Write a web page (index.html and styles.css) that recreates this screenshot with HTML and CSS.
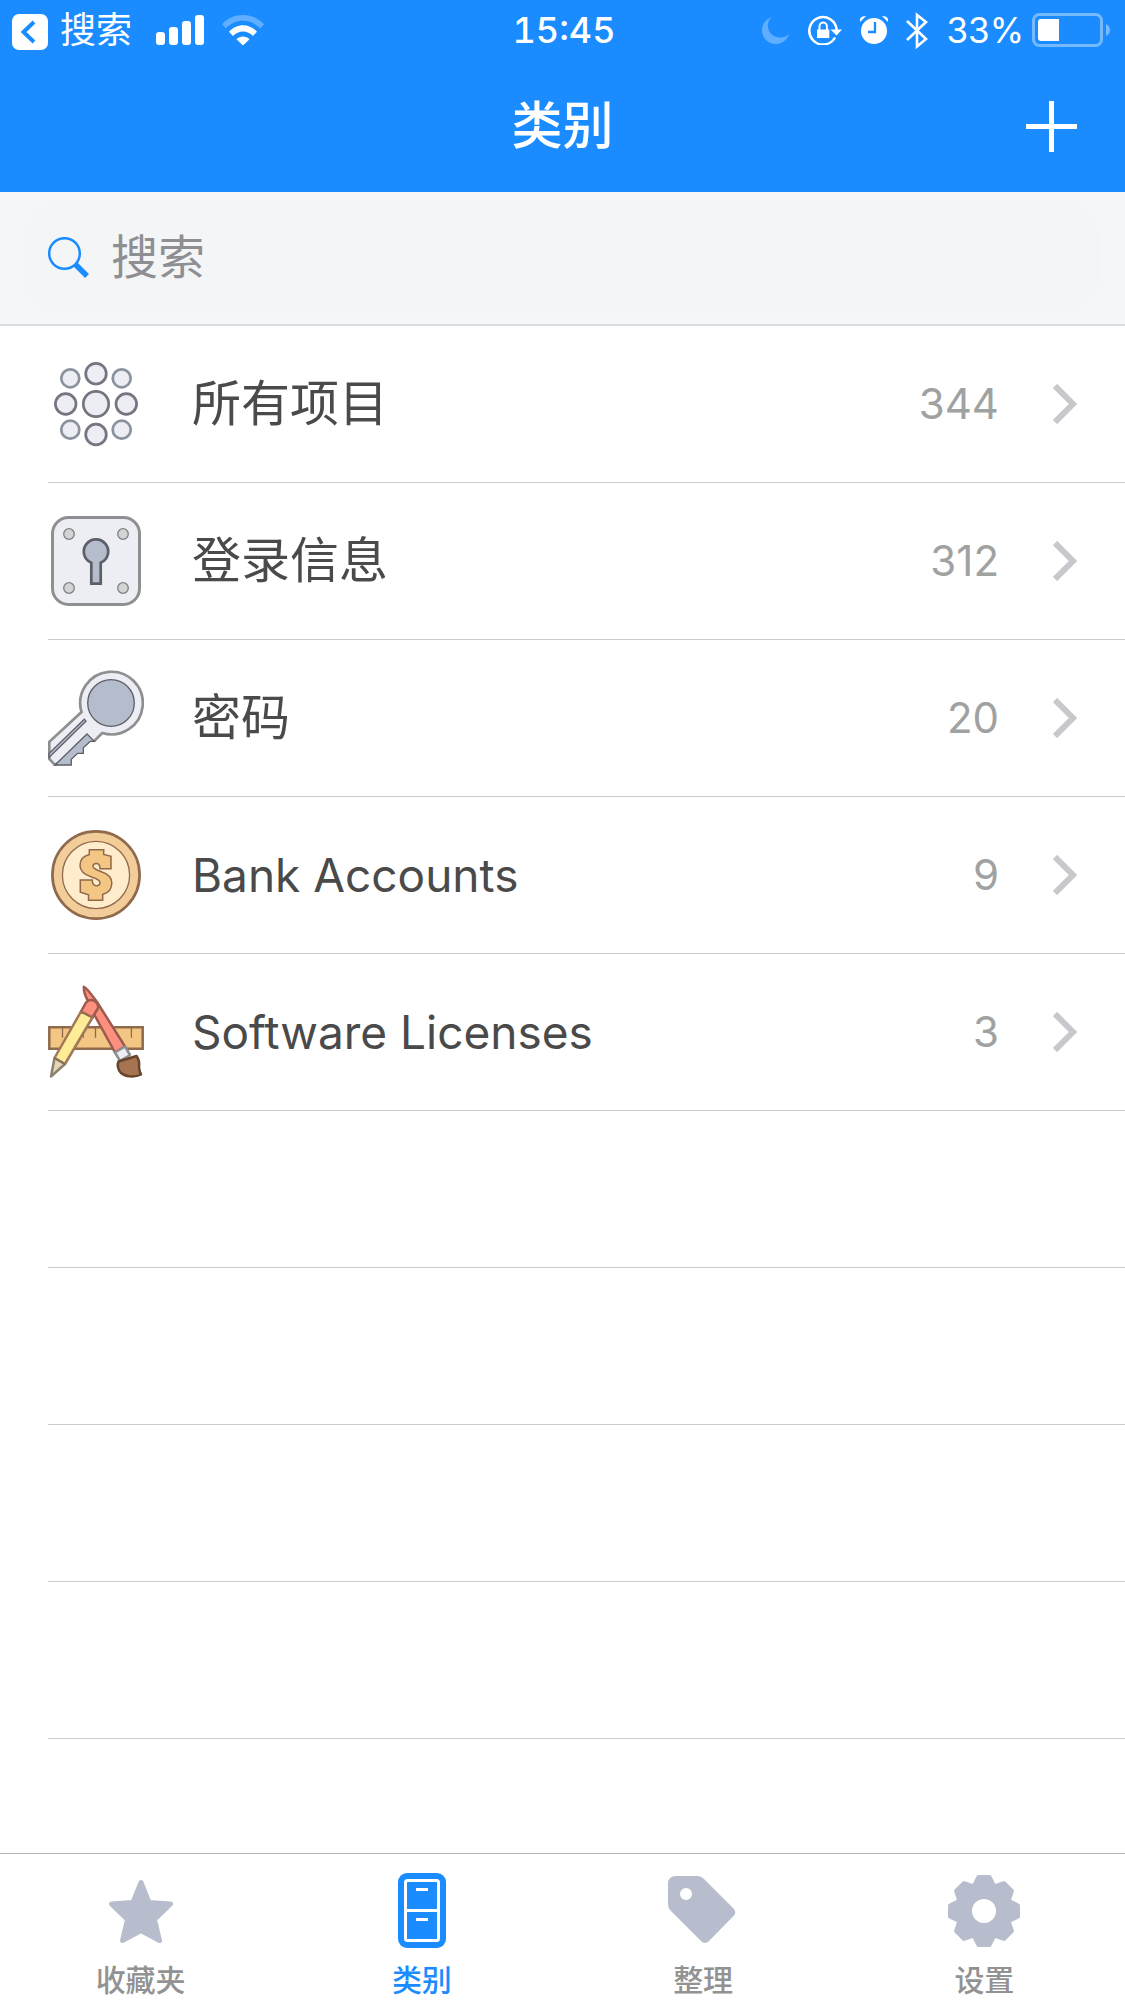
FILE: index.html
```html
<!DOCTYPE html>
<html lang="zh-CN">
<head>
<meta charset="utf-8">
<meta name="viewport" content="width=device-width, initial-scale=1">
<title>类别</title>
<link rel="stylesheet" href="styles.css">
</head>
<body>
<header class="top">
  <div class="status">
    <div class="status-side">
      <a class="status-back" href="#back">
        <svg width="36" height="40" viewBox="0 0 36 40" aria-hidden="true"><rect y="4" width="36" height="36" rx="7" fill="#fff"/><path d="M22 12 11.500 22 22 32" fill="none" stroke="#1a8cff" stroke-width="4"/></svg>
        <span>搜索</span>
      </a>
      <svg width="48" height="30" viewBox="0 0 48 30" fill="#fff" aria-hidden="true"><rect y="17" width="9" height="13" rx="3"/><rect x="13" y="12" width="9" height="18" rx="3"/><rect x="26" y="6" width="9" height="24" rx="3"/><rect x="39" width="9" height="30" rx="3"/></svg>
      <svg width="42" height="30" viewBox="0 0 42 30" fill="#fff" aria-hidden="true"><path opacity=".3" d="M0 9.200C11-3 31-3 42 9.200L38 13.500C28.500 3.300 13.500 3.300 4 13.500Z"/><path d="M7 16.800C14.500 8 27.500 8 35 16.800L31 21C25.500 15 16.500 15 11 21Z"/><path d="M14.500 24.200C18 20.500 24 20.500 27.500 24.200L21 30.500Z"/></svg>
    </div>
    <time class="status-time">15:45</time>
    <div class="status-side status-right">
      <svg width="28" height="28" viewBox="0 0 28 28" aria-hidden="true"><path fill="#fff" opacity=".3" d="M10 1C2 7 6 22 19 21.500C22 21.500 25 20 27.300 17.800C25 24 20 28 13.800 28C6 28 0 22 0 14.300C0 8 4 3 10 1Z"/></svg>
      <svg width="34" height="30" viewBox="0 0 34 30" aria-hidden="true"><path d="M27 22.500A13.700 13.700 0 1 1 28.700 15" fill="none" stroke="#fff" stroke-width="2.500"/><path fill="#fff" d="M22.500 14.500H34L28.500 20.500ZM9 14.500H21.300V23H9Z"/><path d="M11.500 15V11.500a3.700 4 0 0 1 7.400 0V15" fill="none" stroke="#fff" stroke-width="2"/></svg>
      <svg width="28" height="28" viewBox="0 0 28 28" aria-hidden="true"><circle cx="14" cy="15" r="13" fill="#fff"/><path d="M0 6V3Q1 0 6 0ZM28 6V3Q27 0 22 0Z" fill="#fff"/><path d="M15 6V16H8" fill="none" stroke="#1a8cff" stroke-width="2.300"/></svg>
      <svg width="22" height="37" viewBox="0 0 22 37" aria-hidden="true"><path d="M1 9 20 27 11 34.500V3L20 10 1 28" fill="none" stroke="#fff" stroke-width="2.600"/></svg>
      <span class="battery">33%
        <svg width="78" height="34" viewBox="0 0 78 34" aria-hidden="true"><rect x="1.500" y="1.500" width="68" height="31" rx="6" fill="none" stroke="#fff" stroke-opacity=".4" stroke-width="3"/><path d="M27 6V28H9Q6 28 6 25V9Q6 6 9 6Z" fill="#fff"/><path d="M74 11Q78 13 78 17T74 23Z" fill="#fff" opacity=".4"/></svg>
      </span>
    </div>
  </div>
  <div class="titlebar">
    <h1>类别</h1>
    <button class="add" type="button" aria-label="添加"><svg width="51" height="51" viewBox="0 0 51 51" aria-hidden="true"><path d="M0 25.500H51M25.500 0V51" stroke="#fff" stroke-width="5"/></svg></button>
  </div>
</header>

<form class="search">
  <label class="search-box">
    <svg width="41" height="41" viewBox="0 0 41 41" fill="none" stroke="#1a8cff" aria-hidden="true"><circle cx="16.500" cy="16.500" r="15.300" stroke-width="2.500"/><path d="M27 27 39 39" stroke-width="5.500"/></svg>
    <input type="search" placeholder="搜索" aria-label="搜索">
  </label>
</form>

<main class="list">
  <a class="row" href="#all">
    <svg class="icon" viewBox="0 0 96 96" fill="#edeef3" stroke-width="2.700" aria-hidden="true">
      <g stroke="#757582"><circle cx="48" cy="48" r="12.700"/><circle cx="48" cy="17.700" r="10.300"/><circle cx="48" cy="78.500" r="10.300"/><circle cx="17.700" cy="48" r="10.300"/><circle cx="78.300" cy="48" r="10.300"/></g>
      <g stroke="#8a929e"><circle cx="22.300" cy="22.300" r="9"/><circle cx="73.700" cy="22.300" r="9"/><circle cx="22.300" cy="73.700" r="9"/><circle cx="73.700" cy="73.700" r="9"/></g>
    </svg>
    <span class="name">所有项目</span><span class="count">344</span>
    <svg class="chevron" viewBox="0 0 24 40" aria-hidden="true"><path d="M2 2 20 20 2 38"/></svg>
  </a>
  <a class="row" href="#logins">
    <svg class="icon" viewBox="0 0 96 96" aria-hidden="true">
      <rect x="4.500" y="4.500" width="87" height="87" rx="16" fill="#edeef3" stroke="#8e8f90" stroke-width="3"/>
      <g fill="#d3d4d6" stroke="#7f8081" stroke-width="1.300"><circle cx="21" cy="21" r="5.300"/><circle cx="75" cy="21" r="5.300"/><circle cx="21" cy="75" r="5.300"/><circle cx="75" cy="75" r="5.300"/></g>
      <path d="M43.300 49.800A12.200 12.200 0 1 1 52.700 49.800V70.700H43.300Z" fill="#b5bccc" stroke="#5d5f68" stroke-width="2.700"/>
    </svg>
    <span class="name">登录信息</span><span class="count">312</span>
    <svg class="chevron" viewBox="0 0 24 40" aria-hidden="true"><path d="M2 2 20 20 2 38"/></svg>
  </a>
  <a class="row" href="#passwords">
    <svg class="icon" viewBox="0 0 96 96" aria-hidden="true">
      <path d="M33.500 42A31.300 31.300 0 1 1 54.300 63L46.500 70.700 7 95 1.300 89V71.800Z" fill="#edeef3" stroke="#8e8f90" stroke-width="2.700"/>
      <path d="M47.500 72.500 45 70 36 77 24 96H96V72.500Z" fill="#fff"/>
      <circle cx="63" cy="33" r="23.300" fill="#b5bccc" stroke="#5d5f68" stroke-width="1.300"/>
      <g fill="#b5bccc" stroke="#5d5f68" stroke-width="1.300"><path d="M39 64 46.300 71.300H42.300L35.300 77.700V83.300H29.700L23.300 89.300V95H7Z"/><path d="M36.300 49.200 38 51.200 1 87.500V83.500Z"/></g>
    </svg>
    <span class="name">密码</span><span class="count">20</span>
    <svg class="chevron" viewBox="0 0 24 40" aria-hidden="true"><path d="M2 2 20 20 2 38"/></svg>
  </a>
  <a class="row" href="#bank">
    <svg class="icon" viewBox="0 0 96 96" stroke="#8f6a4c" aria-hidden="true">
      <circle cx="48" cy="48" r="43.600" fill="#f3cd99" stroke-width="2.700"/><circle cx="48" cy="48" r="33.600" fill="#ffeccc" stroke-width="1.300"/>
      <path d="M41.300 22.700H55.700V27.500L63 29.300V41.700H52C52 38.500 50.500 36.500 48.300 36.500C46 36.500 45 38 45 39.300C45 42 50 43.500 54 45C60 47 63.800 50 63.800 56C63.800 62 60 66 54.700 67.500V73.300H40.500V67.800L32.300 65.300V53H44.300C44.300 57 46 58.700 48.500 58.700C51 58.700 52 57.300 52 55.500C52 53 48 51.500 43.500 50C36 47.500 32 44.500 32 38.500C32 32.500 36 28.800 41.300 27.500Z" fill="#f3c684" stroke-width="1.500"/>
    </svg>
    <span class="name" lang="en">Bank Accounts</span><span class="count">9</span>
    <svg class="chevron" viewBox="0 0 24 40" aria-hidden="true"><path d="M2 2 20 20 2 38"/></svg>
  </a>
  <a class="row" href="#licenses">
    <svg class="icon" viewBox="0 0 96 96" stroke-width="2.500" stroke-linejoin="round" aria-hidden="true">
      <path d="M1.300 43.300H94.700V64.700H1.300Z" fill="#f3c684" stroke="#8f6a4c" stroke-linejoin="miter"/>
      <path d="M14.500 44V53.700M35.300 44V53.700M47.500 44V53.700M83.400 44V53.700" stroke="#8f6a4c" stroke-width="1.300"/>
      <path d="M35.800 2.800C39 4 44 11 49 18L77 62.500 67 68.500 46.500 31 40 17Q35.500 9 35.800 2.800Z" fill="#ff907f" stroke="#9d5b4d"/>
      <path d="M77 62.500 67 68.500 72 77 82 71Z" fill="#edeef3" stroke="#8e8f90"/>
      <path d="M70.500 77.500 88.500 72Q92 77 91 83 91.500 88 93 90.500C86 94 77 92.500 73 89Q68 83 70.500 77.500Z" fill="#a67450" stroke="#66452c"/>
      <path d="M33 27.500 38 18.500Q41.500 14.500 46.500 17 51.500 20 49.800 24.500L44.500 33.500Z" fill="#ff907f" stroke="#9d5b4d"/>
      <path d="M33 27.500 44.500 33.500 17 80 6.500 74Z" fill="#ffec96" stroke="#a1785a"/>
      <path d="M6.500 74 17 80 3 92.500Z" fill="#e6d6b8" stroke="#8b8370"/>
      <path d="M32.500 27.500 44.500 33.500M6 74 17 80.500" stroke="#8f6a4c" stroke-width="1.300"/>
    </svg>
    <span class="name" lang="en">Software Licenses</span><span class="count">3</span>
    <svg class="chevron" viewBox="0 0 24 40" aria-hidden="true"><path d="M2 2 20 20 2 38"/></svg>
  </a>
  <div class="row"></div>
  <div class="row"></div>
  <div class="row"></div>
  <div class="row"></div>
</main>

<nav class="tabs">
  <a class="tab" href="#favorites">
    <svg class="tab-icon" viewBox="0 0 76 76" aria-hidden="true"><path d="M38 9.500 46 29.500 67.500 31 51.500 46.500 56.500 67.500 38 57.500 19.500 67.500 24.500 46.500 8.500 31 30 29.500Z" fill="currentColor" stroke="currentColor" stroke-width="5" stroke-linejoin="round"/></svg>
    <span class="tab-label">收藏夹</span>
  </a>
  <a class="tab active" href="#categories" aria-current="page">
    <svg class="tab-icon" viewBox="0 0 76 76" aria-hidden="true"><rect x="14" width="48" height="75" rx="9" fill="currentColor"/><g fill="none" stroke="#fff" stroke-width="3"><rect x="21.500" y="7.500" width="33" height="60" rx="2"/><path d="M22 37.500H54M32 16.500H44M32 46.500H44"/></g></svg>
    <span class="tab-label">类别</span>
  </a>
  <a class="tab" href="#organize">
    <svg class="tab-icon" viewBox="0 0 76 76" aria-hidden="true"><path fill="currentColor" fill-rule="evenodd" d="M11 3H33Q36 3 38.500 5.500L68.500 35.500Q72 40 68.500 43L44 68Q40 72 36 68L5.500 37.500Q3 35 3 31V11Q3 3 11 3ZM21 15a6 6 0 1 0 0 12a6 6 0 1 0 0-12Z"/></svg>
    <span class="tab-label">整理</span>
  </a>
  <a class="tab" href="#settings">
    <svg class="tab-icon" viewBox="-38 -38 76 76" aria-hidden="true">
      <g fill="currentColor" stroke="currentColor" stroke-width="4" stroke-linejoin="round"><path id="tooth" d="M-9.500-26-5.500-34H5.500L9.500-26 0 0Z"/><use href="#tooth" transform="rotate(45)"/><use href="#tooth" transform="rotate(90)"/><use href="#tooth" transform="rotate(135)"/><use href="#tooth" transform="rotate(180)"/><use href="#tooth" transform="rotate(225)"/><use href="#tooth" transform="rotate(270)"/><use href="#tooth" transform="rotate(315)"/></g>
      <circle r="28.500" fill="currentColor"/><circle r="12" fill="#fff"/>
    </svg>
    <span class="tab-label">设置</span>
  </a>
</nav>
</body>
</html>
```
FILE: styles.css
```css
* {
  box-sizing: border-box;
}

body {
  margin: 0;
  min-height: 100vh;
  display: flex;
  flex-direction: column;
  background: #fff;
  color: #4a4a4a;
  font-family: Inter, "Noto Sans CJK SC", sans-serif;
}

a {
  color: inherit;
  text-decoration: none;
}

svg {
  display: block;
  flex: none;
}

.top {
  background: #1a8cff;
  color: #fff;
}

.status {
  height: 60px;
  padding: 0 15px 0 12px;
  display: grid;
  grid-template-columns: 1fr auto 1fr;
  align-items: center;
  font-size: 36px;
  line-height: 40px;
}

.status-side {
  display: flex;
  align-items: center;
  gap: 18px;
}

.status-right {
  justify-content: flex-end;
}

.status-back {
  padding-right: 6px;
  display: flex;
  align-items: center;
  gap: 12px;
}

.status-time {
  padding-left: 6px;
  font-weight: 500;
  font-variant-numeric: tabular-nums;
}

.battery {
  display: flex;
  align-items: center;
  gap: 8px;
  font-size: 35px;
}

.titlebar {
  height: 132px;
  padding: 0 48px;
  display: grid;
  grid-template-columns: 1fr auto 1fr;
  align-items: center;
}

.titlebar h1 {
  grid-column: 2;
  margin: 0;
  font-size: 51px;
  line-height: 60px;
  font-weight: 500;
}

.add {
  justify-self: end;
  padding: 0;
  border: 0;
  background: none;
}

.search {
  padding: 10px 25px 12px;
  background: #f5f6f8;
  border-bottom: 2px solid #dbdce1;
}

.search-box {
  height: 110px;
  padding: 0 23px;
  display: flex;
  align-items: center;
  gap: 22px;
  border-radius: 36px;
  background: #f4f5f7;
}

.search-box input {
  flex: 1;
  min-width: 0;
  padding: 0;
  border: 0;
  outline: 0;
  background: none;
  color: #4a4a4a;
  font: inherit;
  font-size: 47px;
  line-height: 60px;
  appearance: none;
}

.search-box input::placeholder {
  color: #8e8e93;
  opacity: 1;
}

.list {
  flex: 1;
  padding-left: 48px;
}

.row {
  height: 157px;
  padding-right: 48px;
  display: flex;
  align-items: center;
  border-bottom: 1px solid #c8ccd0;
}

.icon {
  width: 96px;
  height: 96px;
}

.name {
  flex: 1;
  padding-left: 48px;
  font-size: 49px;
  line-height: 60px;
}

.name:lang(en) {
  font-size: 46px;
}

.count {
  padding-right: 54px;
  color: #a0a2a2;
  font-size: 42px;
  line-height: 60px;
}

.chevron {
  width: 24px;
  height: 40px;
  fill: none;
  stroke: #c7c7cc;
  stroke-width: 6px;
}

.tabs {
  display: flex;
  border-top: 1px solid #b2b4b6;
  background: #fff;
}

.tab {
  flex: 1;
  padding: 19px 0 3px;
  display: flex;
  flex-direction: column;
  align-items: center;
  gap: 13px;
  color: #b7bdcc;
}

.tab-icon {
  width: 76px;
  height: 76px;
}

.tab-label {
  color: #929292;
  font-size: 30px;
  line-height: 36px;
  font-weight: 500;
}

.active,
.active .tab-label {
  color: #1a8cff;
}
```
